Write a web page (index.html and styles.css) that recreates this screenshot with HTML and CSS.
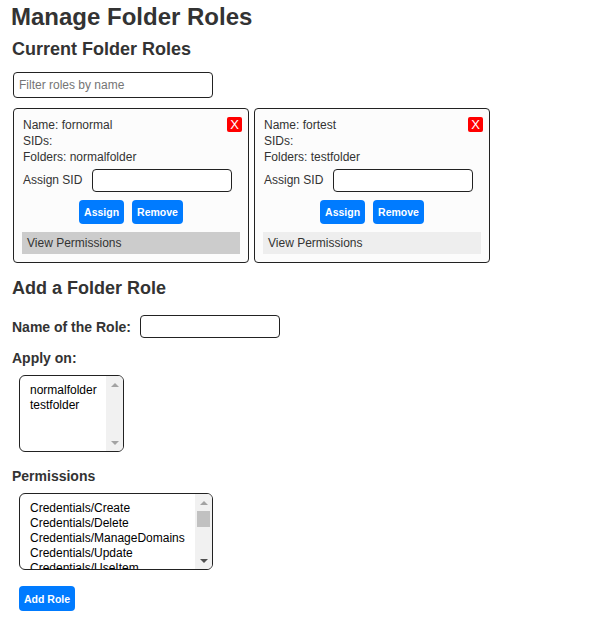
FILE: index.html
```html
<!DOCTYPE html>
<html>
<head>
<meta charset="utf-8">
<link rel="stylesheet" href="styles.css">
</head>
<body>
<div class="page">
  <h1 class="title">Manage Folder Roles</h1>
  <h2 class="subtitle">Current Folder Roles</h2>
  <div class="filter">
    <input class="filter-input" type="text" placeholder="Filter roles by name">
  </div>
  <div class="cards">
    <div class="card">
      <button class="close">X</button>
      <div class="line">Name: fornormal</div>
      <div class="line">SIDs:</div>
      <div class="line">Folders: normalfolder</div>
      <div class="assign-row">
        <span class="assign-label">Assign SID</span>
        <input class="sid-input" type="text">
      </div>
      <div class="btn-row">
        <button class="btn">Assign</button>
        <button class="btn">Remove</button>
      </div>
      <div class="perm-bar perm-bar-active">View Permissions</div>
    </div>
    <div class="card">
      <button class="close">X</button>
      <div class="line">Name: fortest</div>
      <div class="line">SIDs:</div>
      <div class="line">Folders: testfolder</div>
      <div class="assign-row">
        <span class="assign-label">Assign SID</span>
        <input class="sid-input" type="text">
      </div>
      <div class="btn-row">
        <button class="btn">Assign</button>
        <button class="btn">Remove</button>
      </div>
      <div class="perm-bar">View Permissions</div>
    </div>
  </div>
  <h2 class="subtitle add-title">Add a Folder Role</h2>
  <div class="name-row">
    <label class="field-label">Name of the Role:</label>
    <input class="role-input" type="text">
  </div>
  <div class="field-label block-label apply-label">Apply on:</div>
  <div class="listbox listbox-folders" role="listbox" aria-multiselectable="true">
    <div class="options">
      <div class="opt" role="option">normalfolder</div>
      <div class="opt" role="option">testfolder</div>
    </div>
    <div class="sb">
      <div class="sb-btn"><span class="arrow-up"></span></div>
      <div class="sb-track"></div>
      <div class="sb-btn"><span class="arrow-down"></span></div>
    </div>
  </div>
  <div class="field-label block-label perm-label">Permissions</div>
  <div class="listbox listbox-perms" role="listbox" aria-multiselectable="true">
    <div class="options">
      <div class="opt" role="option">Credentials/Create</div>
      <div class="opt" role="option">Credentials/Delete</div>
      <div class="opt" role="option">Credentials/ManageDomains</div>
      <div class="opt" role="option">Credentials/Update</div>
      <div class="opt" role="option">Credentials/UseItem</div>
    </div>
    <div class="sb">
      <div class="sb-btn"><span class="arrow-up"></span></div>
      <div class="sb-track"><div class="sb-thumb"></div></div>
      <div class="sb-btn"><span class="arrow-down arrow-active"></span></div>
    </div>
  </div>
  <div class="add-row">
    <button class="btn btn-add">Add Role</button>
  </div>
</div>
</body>
</html>
```

FILE: styles.css
```css
html, body {
  margin: 0;
  padding: 0;
  background: #ffffff;
}
body {
  font-family: "Liberation Sans", Arial, sans-serif;
  color: #333333;
}
.page {
  padding: 3px 10px 0 12px;
}
.title {
  font-size: 24px;
  font-weight: bold;
  margin: 0 0 8px -1px;
  line-height: 28px;
}
.subtitle {
  font-size: 18px;
  font-weight: bold;
  margin: 0;
  line-height: 21px;
}
.filter {
  margin-top: 12px;
  padding-left: 1px;
}
.filter-input {
  box-sizing: border-box;
  width: 200px;
  height: 26px;
  border: 1px solid #222222;
  border-radius: 4px;
  padding: 0 5px;
  font-family: "Liberation Sans", Arial, sans-serif;
  font-size: 12px;
  color: #333;
  outline: none;
  margin: 0;
}
.filter-input::placeholder {
  color: #757575;
}
.cards {
  display: flex;
  gap: 5px;
  margin-top: 10px;
  padding-left: 1px;
}
.card {
  position: relative;
  box-sizing: border-box;
  width: 236px;
  border: 1px solid #222222;
  border-radius: 4px;
  background: #fcfcfc;
  padding: 8px;
  font-size: 12px;
}
.close {
  position: absolute;
  top: 8px;
  right: 6px;
  width: 15px;
  height: 15px;
  padding: 0;
  margin: 0;
  border: none;
  border-radius: 2px;
  background: #ff0000;
  color: #ffffff;
  font-family: "Liberation Sans", Arial, sans-serif;
  font-size: 13px;
  line-height: 15px;
  text-align: center;
}
.line {
  line-height: 16px;
  padding-left: 1px;
}
.assign-row {
  display: flex;
  align-items: center;
  margin-top: 4px;
  padding-left: 1px;
}
.assign-label {
  width: 69px;
  line-height: 14px;
  padding-bottom: 2px;
}
.sid-input {
  box-sizing: border-box;
  width: 140px;
  height: 23px;
  border: 1px solid #222222;
  border-radius: 4px;
  margin: 0;
  padding: 0 4px;
  outline: none;
  background: #ffffff;
}
.btn-row {
  display: flex;
  justify-content: center;
  gap: 8px;
  margin-top: 8px;
}
.btn {
  height: 24px;
  padding: 0 5px;
  margin: 0;
  border: none;
  border-radius: 4px;
  background: #007bff;
  color: #ffffff;
  font-family: "Liberation Sans", Arial, sans-serif;
  font-size: 10.5px;
  font-weight: bold;
}
.perm-bar {
  margin-top: 8px;
  height: 22px;
  line-height: 22px;
  padding-left: 5px;
  background: #eeeeee;
  font-size: 12px;
}
.perm-bar-active {
  background: #cccccc;
}
.add-title {
  margin-top: 15px;
}
.name-row {
  display: flex;
  align-items: center;
  gap: 9px;
  margin-top: 16px;
}
.field-label {
  font-size: 14px;
  font-weight: bold;
  line-height: 16px;
}
.role-input {
  box-sizing: border-box;
  width: 140px;
  height: 23px;
  border: 1px solid #222222;
  border-radius: 4px;
  margin: 0;
  padding: 0 4px;
  outline: none;
}
.block-label {
  display: block;
}
.apply-label {
  margin-top: 12px;
}
.perm-label {
  margin-top: 16px;
}
.listbox {
  display: flex;
  box-sizing: border-box;
  height: 77px;
  margin: 9px 0 0 7px;
  border: 1px solid #222222;
  border-radius: 6px;
  overflow: hidden;
  background: #ffffff;
  font-size: 12px;
  color: #000000;
}
.listbox-folders {
  width: 105px;
}
.listbox-perms {
  width: 194px;
}
.options {
  flex: 1;
  min-width: 0;
  padding: 7px 0 0 8px;
  overflow: hidden;
}
.opt {
  padding: 0 2px 1px 2px;
  line-height: 14px;
  white-space: nowrap;
}
.sb {
  width: 17px;
  flex: none;
  display: flex;
  flex-direction: column;
  background: #f1f1f1;
}
.sb-btn {
  height: 17px;
  flex: none;
  display: flex;
  align-items: center;
  justify-content: center;
}
.sb-track {
  flex: 1;
}
.sb-thumb {
  height: 16px;
  margin: 0 2px;
  background: #c1c1c1;
}
.arrow-up {
  width: 0;
  height: 0;
  border-left: 4px solid transparent;
  border-right: 4px solid transparent;
  border-bottom: 4px solid #a3a3a3;
}
.arrow-down {
  width: 0;
  height: 0;
  border-left: 4px solid transparent;
  border-right: 4px solid transparent;
  border-top: 4px solid #a3a3a3;
}
.arrow-active {
  border-top-color: #505050;
}
.add-row {
  margin-top: 16px;
  padding-left: 7px;
}
.btn-add {
  height: 25px;
  padding: 0 5px;
}
```
